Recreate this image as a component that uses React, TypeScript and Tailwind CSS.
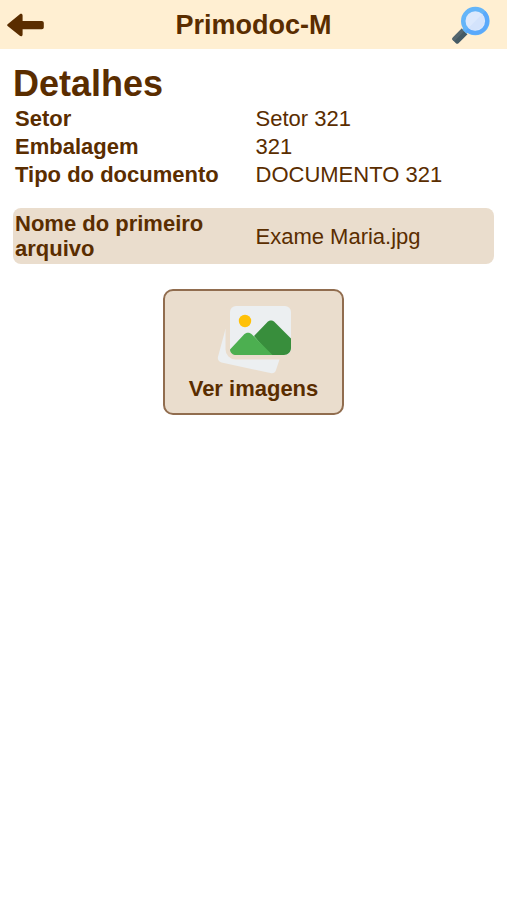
type Field = { label: string; value: string };

const fields: Field[] = [
  { label: "Setor", value: "Setor 321" },
  { label: "Embalagem", value: "321" },
  { label: "Tipo do documento", value: "DOCUMENTO 321" },
];

function BackIcon() {
  return (
    <svg viewBox="0 0 38 24" className="h-6 w-[38px]" fill="#5a2d00" aria-hidden="true">
      <path d="M.6 11.300 12.800 1.300c1.300-1 2.800-.3 2.800 1.300V8h19.200c1.200 0 2 .8 2 2v4.200c0 1.200-.8 2-2 2H15.600v5.200c0 1.600-1.500 2.300-2.800 1.300L.6 12.900c-.6-.5-.6-1.100 0-1.600Z" />
    </svg>
  );
}

function SearchIcon() {
  return (
    <svg viewBox="0 0 38 38" className="size-[38px]" aria-hidden="true">
      <path d="m9.800 22.600 5.700 5.600-9 9c-.8.800-1.800.8-2.600 0L.9 34.200c-.8-.8-.8-1.800 0-2.600Z" fill="#455a64" />
      <path d="m9.800 22.600 2.500 2.400-9 9.200c-.8.700-1.600.8-2.400 0-.8-.8-.8-1.800 0-2.600Z" fill="#54666f" />
      <path d="m12.500 20.500 5 5-3 2.200-4.200-4.200Z" fill="#64b5f6" />
      <circle cx="23.300" cy="15" r="14.300" fill="#64b5f9" />
      <path d="M33.400 4.900A14.300 14.300 0 0 1 13.200 25.100Z" fill="#5aa9fb" />
      <circle cx="23.300" cy="15" r="9.800" fill="#dce9fd" />
      <path d="M30.200 8.100a9.800 9.800 0 0 1-13.800 13.800Z" fill="#d3e3fc" />
    </svg>
  );
}

function ImagesIcon() {
  return (
    <svg viewBox="-2 0 76 70" className="h-[70px] w-[76px]" aria-hidden="true">
      <path d="M8.500 24 60 30 62.500 54.500 59 65c-.8 2.700-2.900 3.800-5.600 3.100L4.500 57.500c-2.800-.8-4.200-3-3.500-5.800Z" fill="#eceff1" />
      <rect x="10.500" y="-1.500" width="65" height="54" rx="8" fill="#eaddcd" stroke="#eaddcd" strokeWidth="4" />
      <rect x="13" y="1" width="61" height="49" rx="6" fill="#eceff1" />
      <circle cx="28" cy="16" r="6.200" fill="#ffc107" />
      <path d="M37 31 50 17.500c2.500-2.600 5.500-2.600 8 0L74 33.500V43c0 4-3 7-7 7H53Z" fill="#388e3c" />
      <path d="M13 44.500 27 29.500c2.300-2.500 5.700-2.500 8 0L55.500 50H19c-3 0-6-2-6-5.500Z" fill="#4caf50" />
    </svg>
  );
}

export default function App() {
  return (
    <div className="min-h-screen bg-white font-['Liberation_Sans',Arial,sans-serif] text-[22px] leading-[25px] text-[#5a2d00]">
      <header className="flex items-center justify-between bg-[#ffefd2] py-[5px] pr-[17px] pl-[7px]">
        <button type="button" aria-label="Voltar" className="flex h-[39px] w-[50px] items-center">
          <BackIcon />
        </button>
        <h2 className="text-[27px] leading-8 font-bold">Primodoc-M</h2>
        <button type="button" aria-label="Pesquisar" className="flex h-[39px] w-10 items-center justify-end">
          <SearchIcon />
        </button>
      </header>

      <main className="flex flex-col items-center px-[13px] pt-3.5">
        <h1 className="w-full text-4xl leading-[41px] font-bold">Detalhes</h1>

        <table className="w-full table-fixed text-left">
          <tbody>
            {fields.map((field) => (
              <tr key={field.label} className="h-7">
                <th scope="row" className="w-1/2 px-0.5 py-px font-bold">{field.label}</th>
                <td className="px-0.5 py-px">{field.value}</td>
              </tr>
            ))}
          </tbody>
        </table>

        <table className="mt-5 w-full table-fixed text-left">
          <tbody>
            <tr className="h-14">
              <th scope="row" className="w-1/2 rounded-l-lg bg-[#eaddcd] px-0.5 py-px font-bold">
                Nome do primeiro arquivo
              </th>
              <td className="rounded-r-lg bg-[#eaddcd] px-0.5 py-px">Exame Maria.jpg</td>
            </tr>
          </tbody>
        </table>

        <button
          type="button"
          className="mt-[25px] flex flex-col items-center rounded-[10px] border-2 border-[#916d4f] bg-[#eaddcd] px-6 pt-3.5 pb-3 font-bold"
        >
          <ImagesIcon />
          <span className="mt-px">Ver imagens</span>
        </button>
      </main>
    </div>
  );
}
